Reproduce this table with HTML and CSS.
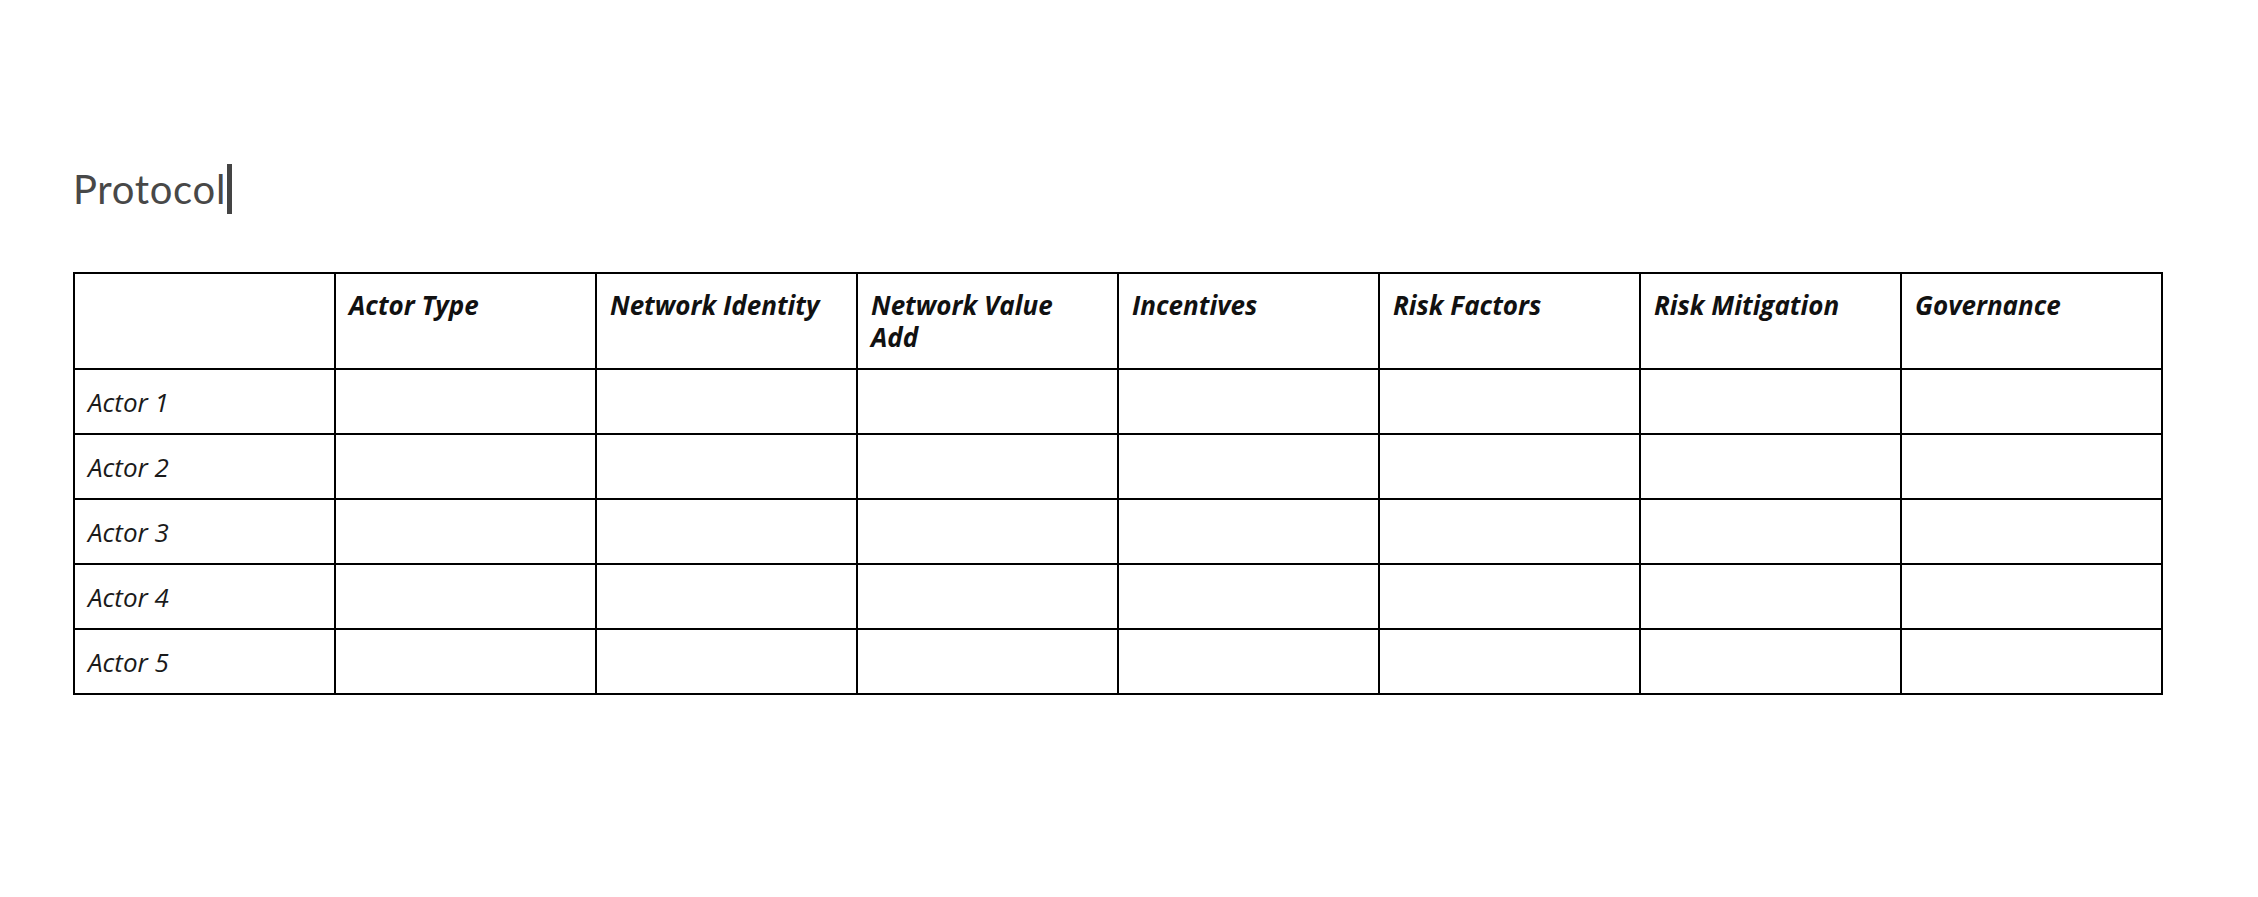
FILE: index.html
```html
<!DOCTYPE html>
<html>
<head>
<meta charset="utf-8">
<link rel="stylesheet" href="styles.css">
</head>
<body>
<div class="page">
  <h1 class="title">Protocol<span class="caret"></span></h1>
  <table class="grid">
    <colgroup>
      <col><col><col><col><col><col><col><col>
    </colgroup>
    <thead>
      <tr>
        <th></th>
        <th>Actor Type</th>
        <th>Network Identity</th>
        <th>Network Value Add</th>
        <th>Incentives</th>
        <th>Risk Factors</th>
        <th>Risk Mitigation</th>
        <th>Governance</th>
      </tr>
    </thead>
    <tbody>
      <tr><td class="label">Actor 1</td><td></td><td></td><td></td><td></td><td></td><td></td><td></td></tr>
      <tr><td class="label">Actor 2</td><td></td><td></td><td></td><td></td><td></td><td></td><td></td></tr>
      <tr><td class="label">Actor 3</td><td></td><td></td><td></td><td></td><td></td><td></td><td></td></tr>
      <tr><td class="label">Actor 4</td><td></td><td></td><td></td><td></td><td></td><td></td><td></td></tr>
      <tr><td class="label">Actor 5</td><td></td><td></td><td></td><td></td><td></td><td></td><td></td></tr>
    </tbody>
  </table>
</div>
</body>
</html>
```
FILE: styles.css
```css
html, body {
  margin: 0;
  padding: 0;
  background: #ffffff;
}

.page {
  padding: 164px 0 0 73px;
  font-family: "Open Sans", Lato, "Liberation Sans", sans-serif;
}

.title {
  margin: 0;
  height: 108px;
  font-family: Lato, "Liberation Sans", sans-serif;
  font-size: 40px;
  font-weight: 400;
  letter-spacing: 0.7px;
  line-height: 50px;
  color: #484848;
  display: flex;
  align-items: flex-start;
}

.caret {
  display: inline-block;
  width: 5px;
  height: 50px;
  margin-left: 1px;
  background: #444444;
}

.grid {
  border-collapse: collapse;
  table-layout: fixed;
  width: 2090px;
}

.grid col {
  width: 261px;
}

.grid th,
.grid td {
  border: 2px solid #000000;
  padding: 0 24px 0 13px;
  color: #111111;
  font-size: 26px;
  text-align: left;
}

.grid th {
  height: 79px;
  vertical-align: top;
  padding-top: 15px;
  font-weight: 700;
  font-style: italic;
  line-height: 32px;
}

.grid td {
  height: 63px;
  vertical-align: middle;
  font-style: italic;
  font-weight: 400;
  line-height: 32px;
  color: #1a1a1a;
}
```
